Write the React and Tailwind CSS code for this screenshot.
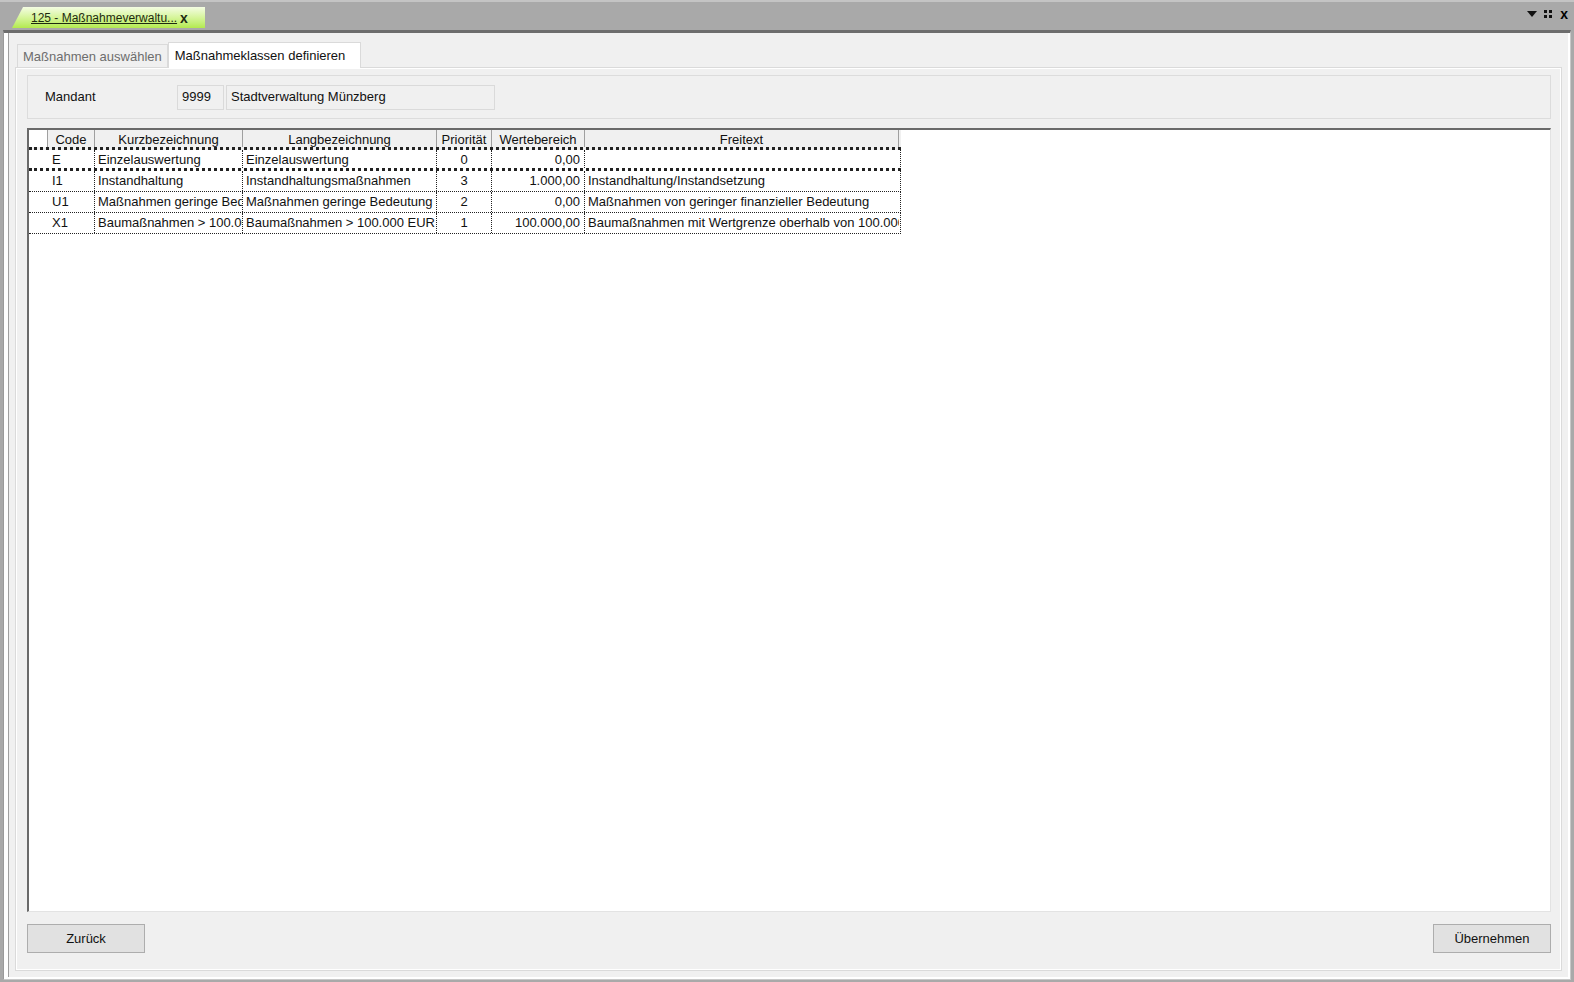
import React from 'react';

const cols = [
  { key: 'code', label: 'Code', w: 'w-[47px]', align: 'text-left pl-[4px]' },
  { key: 'kurz', label: 'Kurzbezeichnung', w: 'w-[148px]', align: 'text-left pl-[3px]' },
  { key: 'lang', label: 'Langbezeichnung', w: 'w-[194px]', align: 'text-left pl-[3px]' },
  { key: 'prio', label: 'Priorität', w: 'w-[55px]', align: 'text-center' },
  { key: 'wert', label: 'Wertebereich', w: 'w-[93px]', align: 'text-right pr-[4px]' },
  { key: 'frei', label: 'Freitext', w: 'w-[314px]', align: 'text-left pl-[3px]' },
];

const rows = [
  { code: 'E', kurz: 'Einzelauswertung', lang: 'Einzelauswertung', prio: '0', wert: '0,00', frei: '' },
  { code: 'I1', kurz: 'Instandhaltung', lang: 'Instandhaltungsmaßnahmen', prio: '3', wert: '1.000,00', frei: 'Instandhaltung/Instandsetzung' },
  { code: 'U1', kurz: 'Maßnahmen geringe Bedeutung', lang: 'Maßnahmen geringe Bedeutung', prio: '2', wert: '0,00', frei: 'Maßnahmen von geringer finanzieller Bedeutung' },
  { code: 'X1', kurz: 'Baumaßnahmen > 100.000 EUR', lang: 'Baumaßnahmen > 100.000 EUR', prio: '1', wert: '100.000,00', frei: 'Baumaßnahmen mit Wertgrenze oberhalb von 100.000 EUR' },
];

function Grid() {
  return (
    <div className="flex-1 bg-white border-l-2 border-t-2 border-l-[#6a6a6a] border-t-[#6a6a6a] border-r border-b border-r-[#e3e3e3] border-b-[#e3e3e3] overflow-hidden">
      <div className="w-[872px]">
        <div className="flex h-[20px] bg-[#f0f0f0] border-b-[3px] border-dotted border-b-[#222]">
          <div className="w-[19px] shrink-0 border-r border-[#a0a0a0] bg-white" />
          {cols.map((c) => (
            <div key={c.key} className={`${c.w} shrink-0 border-r border-[#a0a0a0] text-center leading-[19px] whitespace-nowrap overflow-hidden`}>
              {c.label}
            </div>
          ))}
        </div>
        {rows.map((r, i) => (
          <div
            key={r.code}
            className={`flex h-[21px] border-r border-dotted border-r-[#222] ${i === 0 ? 'border-b-[3px] border-b-[#222] border-dotted' : 'border-b border-b-[#222] border-dotted'}`}
          >
            <div className="w-[19px] shrink-0" />
            {cols.map((c) => (
              <div
                key={c.key}
                className={`${c.w} shrink-0 ${c.align} ${c.key === 'frei' ? '' : 'border-r border-dotted border-r-[#222]'} leading-[20px] whitespace-nowrap overflow-hidden`}
              >
                {r[c.key]}
              </div>
            ))}
          </div>
        ))}
      </div>
    </div>
  );
}

export default function App() {
  return (
    <div className="w-[1574px] h-[982px] bg-[#a9a9a9] flex flex-col text-[13px] text-[#111] font-['Liberation_Sans',Arial,sans-serif] overflow-hidden">
      {/* Dokument-Tabzeile */}
      <div className="h-[30px] flex items-end pl-[12px] pr-[6px] border-t-2 border-t-[#c4c4c4] shrink-0">
        <div className="h-[21px] w-[193px] mb-[2px] bg-gradient-to-b from-[#f4fce2] via-[#d6f59a] to-[#b3ea4c] [clip-path:polygon(11px_0,100%_0,100%_100%,0_100%)] flex items-center pl-[19px] text-[12px] text-[#1e2a10]">
          <span className="underline">125 - Maßnahmeverwaltu...</span>
          <span className="ml-[3px] font-bold text-[14px] leading-none">x</span>
        </div>
        <div className="flex-1" />
        <div className="flex items-center gap-[7px] mb-[9px] text-black">
          <svg width="10" height="6" viewBox="0 0 10 6"><path d="M0 0h10L5 6z" fill="#111" /></svg>
          <svg width="9" height="9" viewBox="0 0 9 9" fill="#111">
            <rect x="0" y="0" width="3" height="3" /><rect x="5" y="0" width="3" height="3" />
            <rect x="0" y="5" width="3" height="3" /><rect x="5" y="5" width="3" height="3" />
          </svg>
          <span className="font-bold text-[14px] leading-none">x</span>
        </div>
      </div>

      {/* Hauptfenster */}
      <div className="flex-1 mx-[3px] mb-[2px] bg-white border-l border-l-[#9a9a9a] border-t-[3px] border-t-[#6d6d6d] border-r border-r-[#c8c8c8] border-b border-b-[#c8c8c8] pl-[4px] pr-[2px] pb-[2px] flex flex-col">
        <div className="flex-1 bg-[#f0f0f0] border-l border-l-[#a0a0a0] pt-[8px] pl-[6px] pr-[6px] pb-[6px] flex flex-col">
          {/* Reiter */}
          <div className="flex items-end h-[26px] pl-[2px]">
            <div className="h-[23px] px-[5px] flex items-center text-[#6d6d6d] bg-[#f0f0f0] border border-b-0 border-[#dadada] text-[13px] pt-[2px]">
              Maßnahmen auswählen
            </div>
            <div className="h-[26px] pl-[6px] pr-[15px] flex items-center bg-white border border-b-0 border-[#dadada] text-[13px] -mb-px relative">
              Maßnahmeklassen definieren
            </div>
          </div>
          <div className="flex-1 bg-white p-[1px] flex flex-col border border-[#dadada]">
            <div className="flex-1 bg-[#f0f0f0] pt-[6px] pl-[10px] pr-[9px] pb-[8px] flex flex-col">
              {/* Mandant */}
              <div className="h-[44px] border border-[#dcdcdc] flex items-center pl-[17px] shrink-0">
                <span className="w-[132px]">Mandant</span>
                <div className="w-[47px] h-[25px] border border-[#dadada] flex items-center pl-[4px]">9999</div>
                <div className="w-[269px] h-[25px] ml-[2px] border border-[#dadada] flex items-center pl-[4px]">Stadtverwaltung Münzberg</div>
              </div>
              {/* Tabelle */}
              <div className="mt-[9px] flex-1 flex flex-col">
                <Grid />
              </div>
              {/* Buttons */}
              <div className="flex justify-between items-center pt-[12px] pb-[8px]">
                <button className="w-[118px] h-[29px] bg-[#e1e1e1] border border-[#adadad] text-[13px]">Zurück</button>
                <button className="w-[118px] h-[29px] bg-[#e1e1e1] border border-[#adadad] text-[13px]">Übernehmen</button>
              </div>
            </div>
          </div>
        </div>
      </div>
    </div>
  );
}
